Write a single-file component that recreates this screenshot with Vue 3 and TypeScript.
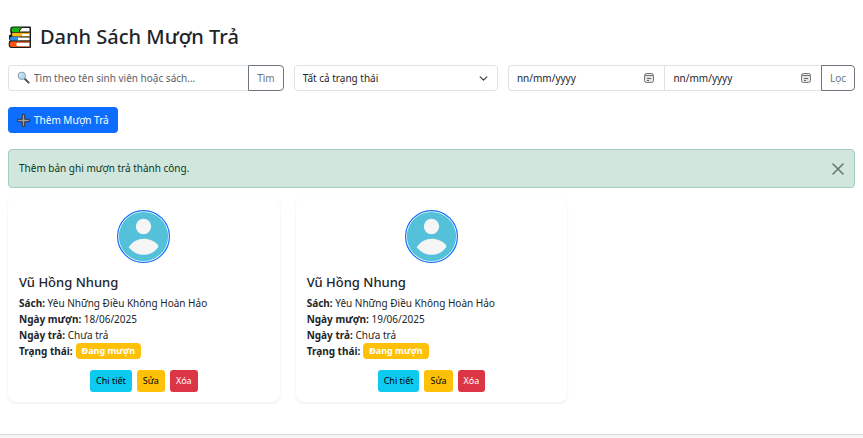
<script setup lang="ts">
import { ref } from 'vue'

interface LoanRecord {
  id: number
  student: string
  book: string
  borrowed: string
  returned: string
  status: string
}

const keyword = ref('')
const status = ref('')
const fromDate = ref('')
const toDate = ref('')
const showAlert = ref(true)

const records: LoanRecord[] = [
  { id: 1, student: 'Vũ Hồng Nhung', book: 'Yêu Những Điều Không Hoàn Hảo', borrowed: '18/06/2025', returned: 'Chưa trả', status: 'Đang mượn' },
  { id: 2, student: 'Vũ Hồng Nhung', book: 'Yêu Những Điều Không Hoàn Hảo', borrowed: '19/06/2025', returned: 'Chưa trả', status: 'Đang mượn' },
]
</script>

<template>
  <div class="page">
    <main class="container">
      <h1 class="title">
        <svg class="books" viewBox="0 0 24 22" aria-hidden="true">
          <path d="M4.500.5h17.500a1 1 0 0 1 1 1V21a1 1 0 0 1-1 1H3.500a3 3 0 0 1-2.800-3v-2a3 3 0 0 1 1.300-2.500L1 13V9.500l2-1.500-.8-2V3A2.500 2.500 0 0 1 4.500.5z" fill="#1b1b1b" />
          <path d="M5 1.500h9L11 4v2H5a1.500 1.500 0 0 1-1.500-1.500V3A1.500 1.500 0 0 1 5 1.500z" fill="#16b60c" />
          <path d="M14 2h7.500v3.500H11.500z" fill="#fff" />
          <path d="M5 6.800h17V8H14v1.800h8v.7H5.500A1.500 1.500 0 0 1 4 9V7.800a1 1 0 0 1 1-1z" fill="#f5b817" />
          <path d="M14 8h7.500v2H14z" fill="#fff" />
          <path d="M3.500 10.800H11v3.700H3.500A1.500 1.500 0 0 1 2 13v-.7a1.500 1.500 0 0 1 1.500-1.500z" fill="#2b8fe8" />
          <path d="M10 11.500h11.500v2.800H10z" fill="#fff" />
          <path d="M4 15.500h18v1.200H10v3.600h12V21H4a2.300 2.300 0 0 1-2.300-2.300v-1A2.200 2.200 0 0 1 4 15.500z" fill="#f7530c" />
          <path d="M10 16.700h11.500v3.500H10a1.700 1.700 0 0 1 0-3.500z" fill="#fff" />
        </svg>
        Danh Sách Mượn Trả
      </h1>

      <div class="filters">
        <form class="group search" @submit.prevent>
          <div class="field">
            <svg v-if="!keyword" class="lens" viewBox="0 0 14 14" aria-hidden="true">
              <path d="M8.300 8.300l4.200 4.200" stroke="#555" stroke-width="2.200" stroke-linecap="round" />
              <circle cx="5.200" cy="5.200" r="4" fill="#b5dcf5" stroke="#8b98a3" />
              <path d="M3 5a2.200 2.200 0 0 1 2-2" fill="none" stroke="#fff" />
            </svg>
            <input v-model="keyword" class="control search-input" type="text" placeholder="Tìm theo tên sinh viên hoặc sách..." aria-label="Tìm theo tên sinh viên hoặc sách" />
          </div>
          <button class="addon" type="submit">Tìm</button>
        </form>

        <div class="field status">
          <select v-model="status" class="control select" aria-label="Trạng thái">
            <option value="">Tất cả trạng thái</option>
            <option value="borrowing">Đang mượn</option>
            <option value="returned">Đã trả</option>
          </select>
          <svg class="chevron" viewBox="0 0 16 16" aria-hidden="true">
            <path d="m2 5 6 6 6-6" fill="none" stroke="#343a40" stroke-width="2" stroke-linecap="round" stroke-linejoin="round" />
          </svg>
        </div>

        <form class="group dates" @submit.prevent>
          <div class="field">
            <input v-model="fromDate" class="control date first" type="text" placeholder="nn/mm/yyyy" aria-label="Từ ngày" />
            <svg class="calendar" viewBox="0 0 10 10" aria-hidden="true">
              <rect x=".5" y=".5" width="9" height="9" rx="2" fill="#e4e4e4" stroke="#777" />
              <path d="M1 2.500h8" stroke="#777" />
              <path d="M3 5.500h4M3 7.500h2" stroke="#666" />
            </svg>
          </div>
          <div class="field">
            <input v-model="toDate" class="control date" type="text" placeholder="nn/mm/yyyy" aria-label="Đến ngày" />
            <svg class="calendar" viewBox="0 0 10 10" aria-hidden="true">
              <rect x=".5" y=".5" width="9" height="9" rx="2" fill="#e4e4e4" stroke="#777" />
              <path d="M1 2.500h8" stroke="#777" />
              <path d="M3 5.500h4M3 7.500h2" stroke="#666" />
            </svg>
          </div>
          <button class="addon" type="submit">Lọc</button>
        </form>
      </div>

      <button class="add" type="button">
        <svg class="plus" viewBox="0 0 12 12" aria-hidden="true">
          <path d="M4.900.5h2.200v4.400h4.400v2.200H7.100v4.400H4.900V7.100H.5V4.900h4.400z" fill="#a0a0a0" stroke="#333" stroke-width=".9" />
        </svg>
        Thêm Mượn Trả
      </button>

      <div v-if="showAlert" class="alert" role="alert">
        <span>Thêm bản ghi mượn trả thành công.</span>
        <button class="close" type="button" aria-label="Đóng" @click="showAlert = false">
          <svg viewBox="0 0 12 12" aria-hidden="true">
            <path d="M1 1l10 10M11 1L1 11" stroke="#68736d" stroke-width="1.500" stroke-linecap="round" />
          </svg>
        </button>
      </div>

      <div class="cards">
        <article v-for="record in records" :key="record.id" class="card">
          <svg class="avatar" viewBox="0 0 53 53" aria-hidden="true">
            <circle cx="26.500" cy="26.500" r="25.900" fill="#fff" stroke="#0d6efd" stroke-width="1.200" />
            <circle cx="26.500" cy="26.500" r="24.600" fill="#55c0da" />
            <circle cx="26.500" cy="16.500" r="7.700" fill="#f5f5f5" />
            <path d="M12 36.700C16 31.500 21 28.800 26.500 28.800S38 31 41.200 35.500v1.500C38 42 32.500 44.800 26.500 44.800S15.500 42 12 37.500z" fill="#f5f5f5" />
          </svg>
          <h2 class="name">{{ record.student }}</h2>
          <div class="details">
            <div><strong>Sách:</strong> {{ record.book }}</div>
            <div><strong>Ngày mượn:</strong> {{ record.borrowed }}</div>
            <div><strong>Ngày trả:</strong> {{ record.returned }}</div>
            <div class="state"><strong>Trạng thái:</strong><span class="badge">{{ record.status }}</span></div>
          </div>
          <div class="actions">
            <button class="action info" type="button">Chi tiết</button>
            <button class="action edit" type="button">Sửa</button>
            <button class="action remove" type="button">Xóa</button>
          </div>
        </article>
      </div>
    </main>
    <footer class="footer"></footer>
  </div>
</template>

<style>
body {
  background: #fff;
}
</style>

<style scoped>
.page {
  display: flex;
  flex-direction: column;
  min-height: 100vh;
  color: #212529;
  font-family: "Segoe UI", "Noto Sans", "Open Sans", sans-serif;
  font-size: 10px;
  line-height: 16px;
}
.page *,
.page *::before {
  box-sizing: border-box;
}
button,
input,
select {
  margin: 0;
  font: inherit;
}
button {
  cursor: pointer;
}
.container {
  flex: 1;
  padding: 24px 8px 32px;
}
.title {
  display: flex;
  align-items: center;
  gap: 8px;
  margin: 0 0 16px;
  font-size: 20px;
  font-weight: 500;
  line-height: 25px;
}
.books {
  width: 24px;
  height: 22px;
}
.filters {
  display: grid;
  grid-template-columns: repeat(12, minmax(0, 1fr));
  gap: 10px;
  margin-bottom: 16px;
}
.group {
  display: flex;
}
.search {
  grid-column: span 4;
}
.status {
  grid-column: span 3;
}
.dates {
  grid-column: span 5;
}
.field {
  position: relative;
  flex: 1;
  min-width: 0;
}
.control {
  display: block;
  width: 100%;
  height: 26px;
  padding: 4px 8px;
  border: 1px solid #dee2e6;
  background: #fff;
  color: #212529;
}
.search-input {
  padding-left: 25px;
  border-right: 0;
  border-radius: 4px 0 0 4px;
}
.search-input::placeholder {
  color: #5c6167;
  opacity: 1;
}
.lens {
  position: absolute;
  top: 6px;
  left: 9px;
  width: 13px;
  height: 13px;
}
.select {
  border-radius: 4px;
  appearance: none;
}
.chevron {
  position: absolute;
  top: 9px;
  right: 10px;
  width: 9px;
  height: 9px;
  pointer-events: none;
}
.date::placeholder {
  color: #212529;
  opacity: 1;
}
.date {
  border-right: 0;
}
.first {
  border-radius: 4px 0 0 4px;
}
.calendar {
  position: absolute;
  top: 8px;
  right: 10px;
  width: 10px;
  height: 10px;
}
.addon {
  height: 26px;
  padding: 0 8px;
  border: 1px solid #6c757d;
  border-radius: 0 4px 4px 0;
  background: #fff;
  color: #6c757d;
}
.add {
  display: flex;
  align-items: center;
  gap: 4px;
  height: 26px;
  margin-bottom: 16px;
  padding: 0 9px;
  border: 0;
  border-radius: 4px;
  background: #0d6efd;
  color: #fff;
}
.plus {
  width: 13px;
  height: 13px;
}
.alert {
  display: flex;
  align-items: center;
  justify-content: space-between;
  margin-bottom: 11px;
  padding: 10px;
  border: 1px solid #a3cfbb;
  border-radius: 4px;
  background: #d1e7dd;
  color: #0a3622;
  line-height: 17px;
}
.close {
  display: flex;
  padding: 0;
  border: 0;
  background: none;
}
.close svg {
  width: 12px;
  height: 12px;
}
.cards {
  display: grid;
  grid-template-columns: repeat(3, minmax(0, 1fr));
  gap: 16px;
}
.card {
  display: flex;
  flex-direction: column;
  padding: 11px 11px 10px;
  border-radius: 8px;
  background: #fff;
  box-shadow: 0 1px 3px rgba(0, 0, 0, 0.08);
}
.avatar {
  align-self: center;
  width: 53px;
  height: 53px;
}
.name {
  margin: 11px 0 4px;
  font-size: 13px;
  font-weight: 500;
  line-height: 17px;
}
.state {
  display: flex;
  align-items: center;
  gap: 3px;
}
.badge {
  padding: 0 6px;
  border-radius: 4px;
  background: #ffc107;
  color: #fff;
  font-size: 9px;
  font-weight: 700;
}
.actions {
  display: flex;
  justify-content: center;
  gap: 5px;
  margin-top: 11px;
}
.action {
  height: 22px;
  padding: 0 6px;
  border: 0;
  border-radius: 3px;
  color: #000;
  font-size: 9px;
}
.info {
  background: #0dcaf0;
}
.edit {
  background: #ffc107;
}
.remove {
  background: #dc3545;
  color: #fff;
}
.footer {
  height: 4px;
  border-top: 1px solid #d5d7d9;
  background: #f5f5f5;
}
</style>
